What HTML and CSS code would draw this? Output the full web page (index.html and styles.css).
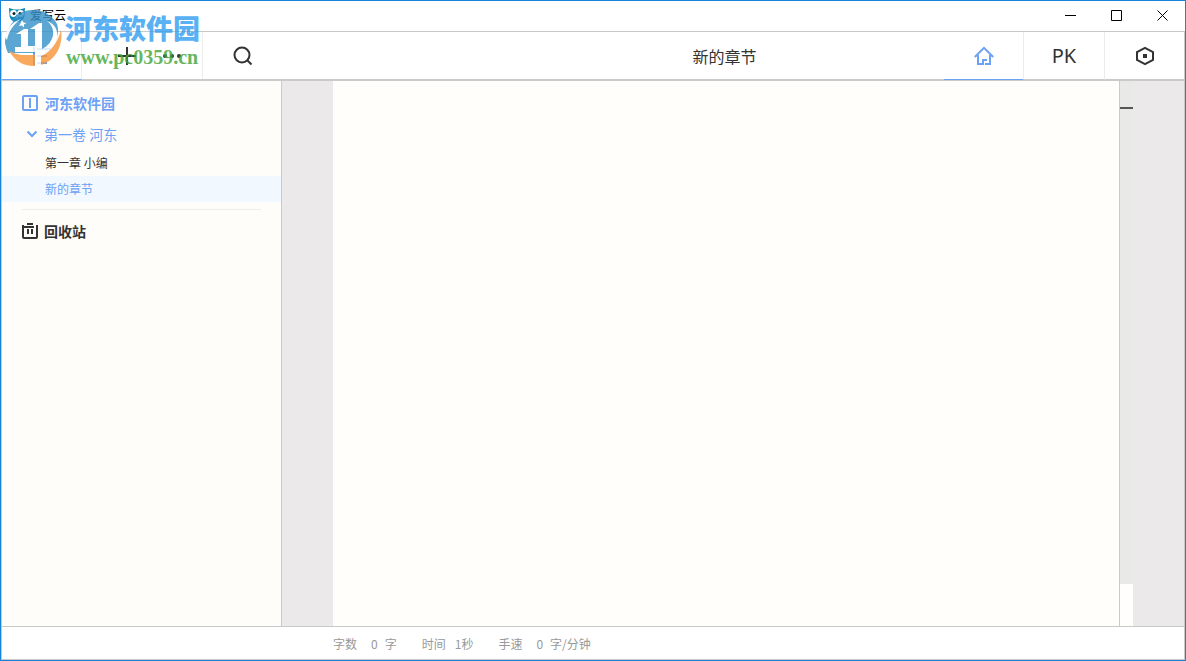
FILE: index.html
```
<!DOCTYPE html>
<html lang="zh-CN">
<head>
  <meta charset="UTF-8" />
  <meta name="viewport" content="width=device-width, initial-scale=1.0" />
  <title>爱写云</title>
  <link rel="stylesheet" href="styles.css">
</head>
<body>
<div class="window">
  <header class="titlebar">
    <svg class="app-icon" width="16" height="16" viewBox="0 0 16 16">
      <path d="M0 1l5 1.500h6L16 1l-.5 7c0 4-3 7-7.500 7S.5 12 .5 8z" fill="#0a86b5"/>
      <circle cx="4.500" cy="6.500" r="3.400" fill="#fff"/>
      <circle cx="11.500" cy="6.500" r="3.400" fill="#fff"/>
      <circle cx="5" cy="6.500" r="1.500" fill="#123"/>
      <circle cx="11" cy="6.500" r="1.500" fill="#123"/>
      <path d="M7 9h2l-1 3z" fill="#fff"/>
    </svg>
    <span class="app-name">爱写云</span>
    <button class="win-btn" aria-label="最小化"><svg width="11" height="11"><path d="M0 5.500h11"/></svg></button>
    <button class="win-btn" aria-label="最大化"><svg width="11" height="11"><path d="M.5.5h10v10H.5z"/></svg></button>
    <button class="win-btn" aria-label="关闭"><svg width="11" height="11"><path d="M.5.5l10 10M10.500.5l-10 10"/></svg></button>
  </header>

  <div class="frame">
    <nav class="toolbar">
      <button class="tool active" aria-label="目录">
        <svg width="20" height="20" viewBox="0 0 20 20"><path d="M2 1v18M5 3h14M5 10h10M5 17h10"/></svg>
      </button>
      <div class="tool-pair">
        <button class="tool-half" aria-label="新建">
          <svg width="20" height="20" viewBox="0 0 20 20"><path d="M10 1v18M1 10h18"/></svg>
        </button>
        <button class="tool-half" aria-label="更多">
          <svg class="dots" width="20" height="20" viewBox="0 0 20 20"><circle cx="3" cy="10" r="2"/><circle cx="10" cy="10" r="2"/><circle cx="17" cy="10" r="2"/></svg>
        </button>
      </div>
      <button class="tool plain" aria-label="搜索">
        <svg width="20" height="20" viewBox="0 0 20 20"><circle cx="9" cy="9" r="7.500"/><path d="M14.500 14.500l4 4"/></svg>
      </button>
      <h1 class="chapter-title">新的章节</h1>
      <button class="tool active" aria-label="主页">
        <svg width="20" height="20" viewBox="0 0 20 20"><path d="M.8 11L10 1.800 19.200 11M4 9v9h5v-4h4M11 18h5V9"/></svg>
      </button>
      <button class="tool pk">PK</button>
      <button class="tool settings" aria-label="设置">
        <svg width="20" height="20" viewBox="0 0 20 20"><path d="M10 1.800l8 4.200v8l-8 4.200L2 14V6z"/><path class="solid" d="M8 8h4v4H8z"/></svg>
      </button>
    </nav>

    <div class="workspace">
      <aside class="sidebar">
        <a class="book" href="#">
          <svg width="16" height="16" viewBox="0 0 16 16"><rect x="1" y="1" width="14" height="14" rx="1"/><path d="M8 3v10"/></svg>
          河东软件园
        </a>
        <a class="volume" href="#">
          <svg width="10" height="8" viewBox="0 0 10 8"><path d="M.5 1.500L5 6l4.500-4.500"/></svg>
          第一卷 河东
        </a>
        <a class="chapter" href="#">第一章 小编</a>
        <a class="chapter current" href="#">新的章节</a>
        <hr class="divider">
        <a class="book trash" href="#">
          <svg width="16" height="16" viewBox="0 0 16 16"><path d="M1 2v12q0 1 1 1h12q1 0 1-1V2M0 4h12M5 1h6M6 6v5M10 6v5"/></svg>
          回收站
        </a>
      </aside>

      <main class="desk">
        <textarea class="paper" aria-label="正文"></textarea>
        <div class="ruler"><div class="track"></div></div>
      </main>
    </div>

    <footer class="status">
      <span class="stat">字数<b>0</b>字</span>
      <span class="stat">时间<b class="tight">1秒</b></span>
      <span class="stat">手速<b>0</b>字/分钟</span>
    </footer>
  </div>

  <div class="watermark">
    <svg width="58" height="58" viewBox="0 0 58 58">
      <path d="M1 34C1 27 4 18 9 13L8 10C14 4 21 1 29 1c11 0 20 6 24 14 4 12-4 25-16 29H4Q2 40 1 34z" fill="#3390c8"/>
      <path d="M57 21c3 18-9 36-27 36-11 0-19-5-25-15 4 2 8 3 12 4h20c10-4 17-13 20-25z" fill="#f79436"/>
      <path d="M1 28C3 19 8 13 17 10 10 15 5 21 3 31z" fill="#fff"/>
      <path d="M12 25l8-5h4v17h7V20h-5l9-6h3v26c6-3 10-8 11-14 1-6-2-11-6-14 8 3 11 9 10 16-1 8-8 16-16 19v10h-6V43H11V38h6V25z" fill="#fff"/>
      <path d="M18 11l1.500 2.500 3 .5-2.500 1.500 0 3-2-2-3 .5 1.500-2.500z" fill="#fff"/>
    </svg>
    <div class="watermark-text">
      <div class="wm-name">河东软件园</div>
      <div class="wm-url">www.pc0359.cn</div>
    </div>
  </div>
</div>
</body>
</html>
```
FILE: styles.css
```
*{box-sizing:border-box;}
html,body{margin:0;height:100%;}
body{font-family:"Noto Sans CJK SC",sans-serif;font-size:12px;color:#333;background:#fff;}
button{margin:0;padding:0;border:0;background:none;font:inherit;color:inherit;}
a{color:inherit;text-decoration:none;}
svg{flex:none;fill:none;stroke:currentColor;stroke-width:2;}

.window{position:relative;display:flex;flex-direction:column;height:100vh;border:1px solid #1883d7;overflow:hidden;}

/* title bar */
.titlebar{display:flex;align-items:flex-start;height:30px;flex:none;padding-left:8px;color:#000;line-height:28px;}
.app-icon{margin-top:6px;stroke:none;}
.app-name{flex:1;margin-left:5px;}
.win-btn{display:flex;align-items:center;justify-content:center;width:46px;height:28px;}
.win-btn svg{stroke-width:1;}

.frame{flex:1;min-height:0;display:flex;flex-direction:column;border:1px solid #c9c9c9;}

/* toolbar */
.toolbar{display:flex;flex:none;height:49px;border-bottom:2px solid #cbc9ca;}
.tool{display:flex;align-items:center;justify-content:center;width:80px;height:48px;border-right:1px solid #ececec;border-bottom:1px solid transparent;}
.tool.active{color:#6ca1f5;border-bottom-color:#6ca1f5;}
.tool.plain{border-right:0;}
.tool.pk{width:81px;font:400 20px "Noto Sans",sans-serif;}
.tool.settings{width:79px;border-right:0;}
.tool-pair{display:flex;justify-content:flex-end;width:121px;padding-right:8px;border-right:1px solid #ececec;}
.tool-half{display:flex;align-items:center;justify-content:center;width:45px;height:48px;}
.dots{fill:currentColor;stroke:none;}
.solid{fill:currentColor;stroke:none;}
.chapter-title{flex:1;margin:0;padding-left:222px;font-size:16px;font-weight:400;line-height:48px;text-align:center;}

/* workspace */
.workspace{flex:1;min-height:0;display:flex;}
.sidebar{width:279px;flex:none;padding-top:7px;background:#fefdf9;}
.book,.volume{display:flex;align-items:center;height:30px;padding-left:20px;gap:7px;font-size:14px;color:#6ca1f5;}
.book{font-weight:700;}
.volume{height:32px;padding-left:25px;}
.chapter{display:block;height:26px;padding-left:43px;line-height:26px;}
.chapter.current{background:#f2f8ff;color:#6ca1f5;}
.divider{height:1px;margin:7px 20px 6px;border:0;background:#eeeeec;}
.trash{gap:6px;color:#333;}

.desk{flex:1;display:flex;padding:0 51px;border-left:1px solid #cbc9ca;background:#ebe9ea;}
.paper{flex:1;min-width:0;border:0;padding:20px;resize:none;outline:0;background:#fffefa;font:inherit;}
.ruler{width:14px;border-left:1px solid #cbcbca;background:#fffefa;}
.track{height:calc(100% - 42px);padding-top:26px;background:#e9e9e7;}
.track::before{content:"";display:block;height:2px;background:#555;}

/* status bar */
.status{display:flex;align-items:center;gap:25px;flex:none;height:33px;padding-left:331px;border-top:1px solid #c9c9c9;color:#999;}
.stat b{margin:0 7px 0 14px;font-weight:400;}
.stat b.tight{margin:0 0 0 9px;}

/* watermark */
.watermark{position:absolute;left:3px;top:8px;display:flex;gap:3px;opacity:.8;pointer-events:none;}
.watermark svg{stroke:none;}
.wm-name{font-size:27px;font-weight:900;line-height:38px;color:#309df0;}
.wm-url{padding-left:1px;font:700 20px/20px "Liberation Serif",serif;color:#40a535;}
```
